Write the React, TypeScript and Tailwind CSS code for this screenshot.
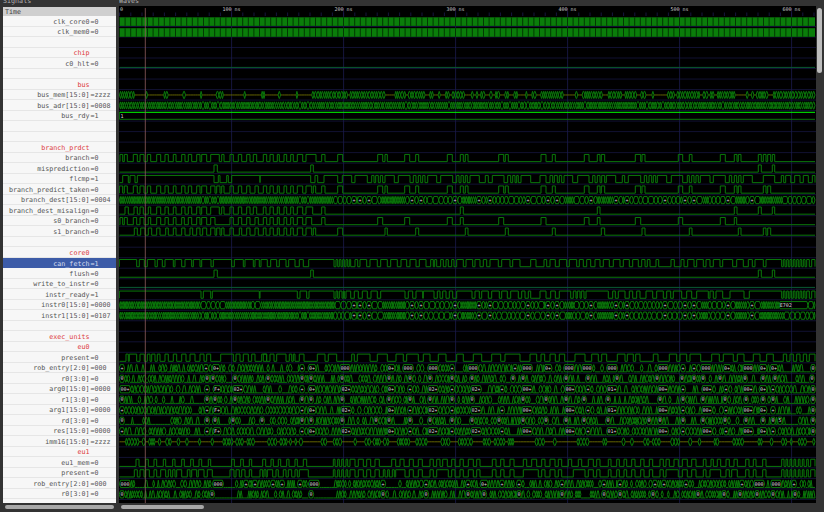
const X0 = 119.5
const X1 = 815
const GREEN = '#0a780a'
const rowY = (i: number) => 21.4 + 10.51 * i

type Row = { name: string; val?: string; group?: boolean; sel?: boolean }

const rows: Row[] = [
  { name: 'clk_core0', val: '0' },
  { name: 'clk_mem0', val: '0' },
  { name: '' },
  { name: 'chip', group: true },
  { name: 'c0_hlt', val: '0' },
  { name: '' },
  { name: 'bus', group: true },
  { name: 'bus_mem[15:0]', val: 'zzzz' },
  { name: 'bus_adr[15:0]', val: '0008' },
  { name: 'bus_rdy', val: '1' },
  { name: '' },
  { name: '' },
  { name: 'branch_prdct', group: true },
  { name: 'branch', val: '0' },
  { name: 'misprediction', val: '0' },
  { name: 'flcmp', val: '1' },
  { name: 'branch_predict_taken', val: '0' },
  { name: 'branch_dest[15:0]', val: '0004' },
  { name: 'branch_dest_misalign', val: '0' },
  { name: 's0_branch', val: '0' },
  { name: 's1_branch', val: '0' },
  { name: '' },
  { name: 'core0', group: true },
  { name: 'can_fetch', val: '1', sel: true },
  { name: 'flush', val: '0' },
  { name: 'write_to_instr', val: '0' },
  { name: 'instr_ready', val: '1' },
  { name: 'instr0[15:0]', val: '0000' },
  { name: 'instr1[15:0]', val: '0107' },
  { name: '' },
  { name: 'exec_units', group: true },
  { name: 'eu0', group: true },
  { name: 'present', val: '0' },
  { name: 'rob_entry[2:0]', val: '000' },
  { name: 'r0[3:0]', val: '0' },
  { name: 'arg0[15:0]', val: '0000' },
  { name: 'r1[3:0]', val: '0' },
  { name: 'arg1[15:0]', val: '0000' },
  { name: 'rd[3:0]', val: '0' },
  { name: 'res[15:0]', val: '0000' },
  { name: 'imm16[15:0]', val: 'zzzz' },
  { name: 'eu1', group: true },
  { name: 'eu1_mem', val: '0' },
  { name: 'present', val: '0' },
  { name: 'rob_entry[2:0]', val: '000' },
  { name: 'r0[3:0]', val: '0' },
]

// numbers below were read off 3x crops, so each list carries its crop offset
function z(off: number, v: number[]) {
  const out: [number, number][] = []
  for (let i = 0; i + 1 < v.length; i += 2) out.push([off + v[i] / 3, off + v[i + 1] / 3])
  return out
}

function pulses(i: number, spans: [number, number][]) {
  const hi = rowY(i) - 3.6
  const lo = rowY(i) + 3.6
  let d = `M${X0},${lo}`
  spans.forEach(([a, b]) => {
    d += `L${a.toFixed(1)},${lo}L${a.toFixed(1)},${hi}L${b.toFixed(1)},${hi}L${b.toFixed(1)},${lo}`
  })
  return d + `L${X1},${lo}`
}

function rng(seed: number) {
  let s = seed
  return () => {
    s = (s * 1664525 + 1013904223) % 4294967296
    return s / 4294967296
  }
}

type Label = [number, string, number?]

function hex(a: number, b: number, hi: number, lo: number) {
  const e = Math.min(1.1, (b - a) / 2)
  const m = (hi + lo) / 2
  const f = (n: number) => n.toFixed(1)
  return `M${f(a)},${m}L${f(a + e)},${hi}L${f(b - e)},${hi}L${f(b)},${m}L${f(b - e)},${lo}L${f(a + e)},${lo}Z`
}

// peak used by the register rows: value leaves the low rail and comes back
function hump(a: number, b: number, hi: number, lo: number) {
  const f = (n: number) => n.toFixed(1)
  const e = Math.min(1.1, (b - a) / 2)
  return `M${f(a)},${lo}L${f(a + e)},${hi}L${f(b - e)},${hi}L${f(b)},${lo}`
}

// eye pattern for a vector signal, wider cells where a value is printed
function eyes(
  i: number,
  seed: number,
  opts: {
    labels?: Label[]
    step?: number
    dense?: [number, number][]
    zero?: number
    active?: [number, number][]
    lowOff?: boolean
  },
) {
  const hi = rowY(i) - 3.6
  const lo = rowY(i) + 3.6
  const r = rng(seed)
  const step = opts.step ?? 4.5
  const labels = [...(opts.labels ?? [])].sort((a, b) => a[0] - b[0])
  let d = ''
  let flat = ''
  const fill = (from: number, to: number) => {
    let x = from
    while (x < to - 0.5) {
      const inDense = opts.dense?.some(([a, b]) => x >= a && x < b)
      const base = inDense ? 1.7 : step
      let w = base * (0.75 + r() * 0.6)
      if (to - x - w < 1) w = to - x
      const off = opts.active && !opts.active.some(([a, b]) => x >= a && x < b)
      if (off && opts.lowOff) {
        d += `M${x.toFixed(1)},${lo}L${(x + w).toFixed(1)},${lo}`
      } else if (off) {
        flat += `M${x.toFixed(1)},${rowY(i)}L${(x + w).toFixed(1)},${rowY(i)}`
      } else if (opts.zero) {
        const v = r()
        if (v < opts.zero) d += `M${x.toFixed(1)},${lo}L${(x + w).toFixed(1)},${lo}`
        else if (v < opts.zero + 0.4) d += hump(x, x + w, hi, lo) + `M${x.toFixed(1)},${lo}L${(x + w).toFixed(1)},${lo}`
        else d += hex(x, x + w, hi, lo)
      } else {
        d += hex(x, x + w, hi, lo)
      }
      x += w
    }
  }
  let x = X0
  const boxes: { p: number; t: string }[] = []
  labels.forEach(([p, t, width]) => {
    const w = width ?? (t ? t.length * 2.9 + 2.4 : 3.6)
    const a = width ? p : p - w / 2
    fill(x, a)
    d += hex(a, a + w, hi, lo)
    if (t) boxes.push({ p: width ? a + 1 + (t.length * 2.9) / 2 : p, t })
    x = a + w
  })
  fill(x, X1)
  return { d, flat, boxes, y: rowY(i) + 1.7 }
}

const branch = [
  ...z(0, [360, 368, 373, 382, 400, 412, 420, 432, 442, 452, 470, 482, 495, 505, 520, 528, 545, 555, 565, 575, 590, 600, 605, 620, 632, 658, 665, 672, 690, 700, 715, 725, 740, 750, 760, 770]),
  ...z(260, [10, 20, 30, 40, 52, 58, 72, 80, 92, 100, 112, 128, 138, 168, 185, 195, 233, 248, 353, 368, 375, 382, 434, 449, 467, 476, 562, 577, 601, 610, 616, 624, 716, 731, 736, 745]),
  ...z(540, [3, 18, 37, 46, 133, 147, 172, 180, 184, 194, 286, 302, 306, 315, 415, 428, 448, 456, 541, 556, 583, 591, 595, 603, 655, 664, 670, 678, 683, 692, 697, 704]),
]
const mispred = [...z(0, [642, 652]), ...z(260, [152, 160]), ...z(540, [655, 664, 697, 704])]
const flcmp = [
  ...z(0, [368, 385, 390, 405, 412, 642, 655, 660, 680, 685, 695, 780]),
  ...z(260, [0, 152, 165, 173, 192, 233, 247, 275, 285, 322, 335, 342, 347, 355, 361, 368, 375, 403, 415, 450, 460, 468, 475, 482, 488, 495, 503, 530, 542, 578, 590, 597, 603, 610, 616, 622, 630, 658, 676, 685, 697, 732, 743, 752, 758, 765, 770, 775, 783, 812]),
  ...z(540, [0, 18, 30, 38, 43, 52, 58, 65, 72, 98, 113, 147, 158, 165, 172, 180, 185, 194, 199, 227, 247, 254, 265, 302, 313, 320, 327, 335, 340, 347, 352, 380, 394, 428, 442, 448, 455, 462, 468, 475, 481, 510, 520, 556, 568, 575, 583, 590, 596, 603, 610, 637, 670, 704, 724, 731, 737, 752, 764, 780, 790, 805, 817, 825]),
]
const taken = [
  ...z(0, [358, 368, 373, 382, 400, 412, 420, 432, 442, 452, 470, 482, 495, 505, 520, 528, 545, 555, 565, 575, 590, 600, 605, 620, 632, 645, 650, 660, 665, 672, 690, 700, 715, 725, 740, 750, 765, 775]),
  ...z(260, [10, 20, 30, 40, 52, 58, 72, 80, 92, 100, 112, 128, 138, 155, 160, 167, 185, 195, 233, 248, 353, 368, 375, 382, 434, 449, 467, 476, 562, 577, 601, 610, 616, 624, 716, 731, 736, 745]),
  ...z(540, [3, 18, 37, 46, 133, 147, 172, 180, 184, 194, 286, 302, 306, 315, 415, 428, 448, 456, 541, 556, 583, 591, 595, 603, 670, 678, 683, 692]),
]
const misalign = [
  ...z(0, [375, 385, 402, 412, 420, 430, 445, 452, 470, 482, 495, 505, 520, 528, 545, 555, 565, 575, 590, 600, 605, 620, 632, 658, 665, 672, 690, 700, 715, 725, 740, 750, 760, 770]),
  ...z(260, [10, 18, 30, 40, 52, 58, 72, 80, 92, 100, 112, 128, 138, 158, 185, 195, 601, 610]),
  ...z(540, [172, 180, 583, 591, 655, 664, 697, 704]),
]
const s0 = [
  ...z(0, [360, 368, 373, 382, 400, 410, 420, 432, 445, 452, 470, 482, 495, 505, 520, 528, 545, 553, 565, 575, 590, 600, 605, 620, 632, 645, 690, 700, 715, 725, 740, 750, 765, 775]),
  ...z(260, [10, 20, 30, 40, 52, 58, 72, 80, 92, 100, 112, 128, 138, 155, 185, 195, 353, 368, 434, 449, 562, 577, 601, 610, 716, 731]),
  ...z(540, [3, 18, 133, 147, 172, 180, 286, 302, 415, 428, 541, 556, 583, 590]),
]
const s1 = [
  ...z(0, [403, 412, 422, 435, 445, 455, 470, 480, 497, 505, 520, 528, 545, 555, 570, 578, 590, 600, 608, 620, 632, 645, 650, 660, 665, 672, 690, 700, 718, 725, 740, 750, 765, 775]),
  ...z(260, [10, 18, 30, 40, 52, 58, 72, 80, 92, 100, 112, 128, 138, 155, 160, 167, 233, 248, 375, 382, 467, 476, 616, 624, 736, 745]),
  ...z(540, [37, 46, 184, 194, 306, 315, 448, 456, 595, 603, 670, 678, 683, 692]),
]
const canFetch = [
  ...z(0, [358, 410, 418, 433, 442, 465, 472, 487, 495, 520, 525, 545, 555, 575, 580, 600, 605, 633, 640, 695, 703, 730, 735, 760, 765, 778]),
  ...z(260, [3, 22, 32, 50, 58, 78, 86, 105, 118, 130, 146, 222, 228, 233, 238, 243, 248, 253, 258, 263, 268, 272, 285, 293, 300, 320, 330, 352, 362, 382, 392, 412, 423, 440, 450, 468, 478, 498, 512, 520, 524, 530, 542, 550, 558, 565, 575, 582, 590, 610, 618, 638, 645, 660, 670, 680, 690, 715, 725, 750, 758, 780, 812, 828]),
  ...z(540, [12, 20, 30, 46, 58, 80, 88, 110, 118, 130, 140, 152, 165, 180, 190, 208, 220, 240, 250, 268, 278, 295, 305, 315, 322, 330, 348, 356, 393, 403, 423, 432, 443, 462, 470, 490, 498, 510, 520, 540, 548, 578, 590, 610, 625, 637, 645, 670, 678, 725, 730, 735, 740, 745, 750, 755, 760, 765, 770, 775, 780, 785, 790, 795, 800, 808, 815, 825]),
]
const instrReady = [
  ...z(0, [358, 603, 610, 632, 637, 778]),
  ...z(260, [0, 112, 120, 140, 147, 222, 228, 233, 238, 246, 250, 253, 258, 272, 283, 295, 307, 322, 333, 352, 362, 435, 445, 458, 468, 488, 490, 522, 532, 540, 548, 558, 568, 578, 590, 636, 645, 658, 665, 685, 695, 718, 725, 742, 752, 775, 785, 795, 805, 812]),
  ...z(540, [0, 18, 32, 46, 58, 92, 100, 108, 112, 120, 124, 132, 138, 205, 218, 226, 235, 255, 268, 278, 290, 300, 318, 338, 350, 370, 380, 392, 400, 425, 440, 455, 470, 505, 510, 520, 528, 548, 570, 612, 628, 725, 730, 735, 740, 745, 750, 755, 760, 765, 770, 775, 780, 785, 790, 795, 800, 808, 815, 825]),
]
const present0 = [
  ...z(0, [378, 385, 388, 410, 420, 433, 442, 450, 455, 465, 472, 480, 495, 505, 520, 530, 545, 558, 570, 585, 600, 612, 620, 632, 662, 700, 708, 720, 730, 745, 755, 765, 785, 800]),
  ...z(260, [10, 20, 30, 42, 50, 78, 88, 95, 100, 105, 118, 132, 172, 195, 205, 230, 275, 283, 292, 330, 352, 382, 408, 430, 440, 475, 490, 510, 535, 558, 590, 610, 640, 665, 695, 722, 735, 780, 810, 830]),
  ...z(540, [3, 14, 30, 46, 58, 74, 105, 135, 155, 175, 185, 200, 232, 255, 262, 280, 287, 300, 340, 354, 388, 410, 420, 440, 450, 482, 515, 538, 550, 580, 592, 612, 640, 660, 680, 700, 730, 740, 750, 760, 770, 780, 790, 800, 808, 825]),
]
const eu1Mem = [
  ...z(0, [408, 417, 437, 445, 462, 470, 490, 497, 518, 525, 545, 553, 572, 580, 597, 605, 625, 632, 695, 703, 722, 730, 748, 755]),
  ...z(260, [8, 17, 33, 40, 55, 62, 80, 87, 105, 112, 130, 140, 220, 225, 233, 238, 245, 250, 258, 263, 270, 285, 295, 310, 320, 332, 345, 358, 395, 407, 420, 432, 448, 460, 475, 487, 510, 520, 530, 540, 548, 562, 575, 585, 600, 610, 625, 640, 650, 660, 697, 708, 722, 732, 750, 762, 790, 800, 815, 830, 845, 855, 870, 885, 895, 905, 925, 935, 955, 965, 985, 1000, 1010, 1020]),
  ...z(600, [25, 33, 50, 58, 72, 80, 95, 105, 122, 132, 148, 158, 180, 190, 198, 208, 222, 235, 247, 262, 275, 288, 310, 318, 333, 340, 352, 362, 378, 388, 402, 412, 437, 447, 460, 468, 488, 498, 545, 552, 558, 563, 570, 575, 582, 587, 595, 600, 607, 612, 620, 625, 632, 645]),
]
const present1 = [
  ...z(0, [403, 412, 420, 432, 437, 448, 462, 470, 482, 497, 505, 512, 518, 525, 530, 545, 562, 570, 575, 590, 595, 612, 622, 637, 690, 702, 708, 718, 725, 735, 748, 755]),
  ...z(260, [0, 8, 12, 18, 22, 38, 48, 55, 70, 78, 85, 95, 105, 112, 118, 145, 220, 225, 233, 238, 245, 250, 258, 263, 270, 285, 295, 310, 320, 332, 345, 358, 370, 375, 383, 388, 397, 403, 407, 435, 448, 460, 475, 487, 510, 520, 530, 565, 575, 585, 600, 610, 625, 640, 650, 660, 697, 708, 722, 732, 750, 762, 790, 835, 845, 855, 870, 885, 895, 905, 940, 975, 985, 1000, 1010, 1020]),
  ...z(600, [25, 33, 50, 58, 72, 80, 95, 105, 122, 132, 148, 158, 180, 190, 198, 235, 247, 262, 275, 288, 310, 318, 330, 362, 378, 388, 395, 412, 437, 447, 460, 468, 488, 498, 545, 552, 558, 563, 570, 575, 582, 587, 595, 600, 607, 612, 620, 625, 632, 645]),
]

const plusAt = (xs: number[]): Label[] => xs.map(x => [x, '+'])
const wide = (xs: number[]): Label[] => xs.map(x => [x, ''])
const lab = (s: string): Label[] =>
  s.split(' ').map(p => {
    const [x, t] = p.split(':')
    return [Number(x), t] as Label
  })

const destPlus = [354, 360, 369, 412, 421, 455, 479, 490, 528, 548, 557, 591, 616, 627, 665, 685, 694, 728, 752]
const destDense: [number, number][] = [[119, 333], [379, 405], [458, 473], [562, 572], [595, 612], [620, 625], [700, 707], [733, 745], [757, 782]]
const destWide = [203, 210, 218, 300, 308, 406, 449, 502, 510, 519, 528, 542, 585, 638, 647, 663, 723]
const argL = '207:+ 217:F+ 302:+ 312:0+ 346:02+ 391:0+ 410:+ 433:02+ 452:+ 476:02+ 502:+ 527:00+ 570:00+ 588:+ 612:01+ 663:00+ 683:+ 707:00+ 726:+ 748:00+ 763:0+ 773:+ 813:0'
const zeroL = (xs: number[]): Label[] => xs.map(x => [x, '0'])
const imm = [
  ...z(0, [375, 410, 425, 435, 445, 465, 470, 480, 495, 510, 525, 535, 550, 565, 590, 600, 630, 640, 665, 695, 705, 725, 740, 755]),
  ...z(260, [15, 45, 55, 80, 85, 90, 95, 105, 115, 120, 140, 147, 175, 195, 210, 240, 275, 285, 308, 330, 335, 355, 362, 380, 408, 445, 465, 500, 537, 570, 590, 630, 665, 685, 697, 730, 740, 760, 820, 850, 875, 885, 945, 980]),
  ...z(600, [5, 20, 55, 70, 88, 100, 130, 145, 155, 175, 210, 232, 262, 275, 290, 300, 338, 355, 392, 430, 470, 485, 505, 510, 540, 560, 570, 575, 580, 585, 590, 595, 600, 605, 610, 615, 630, 640]),
]
const busMem = [
  ...z(0, [358, 378, 382, 402, 432, 440, 488, 497, 544, 550, 597, 604, 643, 652, 655, 665, 725, 732, 780, 790]),
  ...z(260, [0, 6, 52, 58, 105, 113, 153, 235, 240, 260, 268, 375, 402, 415, 422, 435, 443, 495, 507, 516, 528, 537, 550, 562, 575, 612, 630, 637, 643, 650, 658, 670, 685, 695, 703, 718, 730, 745, 757, 772, 792, 800, 810, 825]),
  ...z(540, [0, 66, 98, 106, 120, 135, 140, 180, 198, 240, 252, 288, 300, 316, 333, 341, 380, 400, 404, 478, 487, 497, 508, 516, 528, 585, 610, 620, 626, 636, 642, 678, 696, 825]),
]
const eu1Active: [number, number][] = [[119, 210], [233, 306], [333, 815]]

const vectors = [
  eyes(7, 11, { active: busMem, step: 2.2 }),
  eyes(8, 23, { labels: wide(destWide), step: 2 }),
  eyes(17, 5, { labels: [...wide(destWide.slice(0, 5)), ...plusAt(destPlus)], dense: destDense }),
  eyes(27, 37, { labels: [...plusAt(destPlus), [779, 'E702', 29] as Label], dense: [[119, 200], [222, 250], [257, 333], [379, 405], [458, 473], [562, 572], [595, 612], [700, 707], [733, 745], [757, 776]], step: 4.5 }),
  eyes(28, 41, { labels: [...wide(destWide.slice(0, 5)), ...plusAt(destPlus)], dense: destDense }),
  eyes(33, 53, { labels: lab('122:+ 206:+ 216:0+ 302:+ 312:0+ 345:000 391:0+ 408:000 433:000 452:+ 473:000 515:+ 527:000 548:0+ 569:000 587:000 612:000 663:000 683:+ 694:+ 706:000 727:0+ 748:000 763:0+ 774:0+ 813:0'), step: 2.8, zero: 0.25 }),
  eyes(34, 61, { labels: zeroL([122, 207, 213, 235, 268, 302, 311, 342, 389, 410, 430, 452, 472, 513, 523, 566, 588, 617, 657, 682, 694, 703, 720, 745, 763, 775, 812]), step: 2.6, zero: 0.3 }),
  eyes(35, 71, { labels: [[125, '00+'] as Label, [238, '02+'] as Label, ...lab(argL)], step: 3, zero: 0.15 }),
  eyes(36, 79, { labels: zeroL([122, 207, 215, 235, 268, 302, 311, 342, 389, 410, 430, 452, 472, 523, 546, 566, 584, 608, 660, 683, 703, 725, 746, 763, 773, 813]), step: 2.6, zero: 0.3 }),
  eyes(37, 83, { labels: [[122, '+'] as Label, ...lab(argL)], step: 3, zero: 0.15 }),
  eyes(38, 97, { labels: [[780, '5'] as Label, ...zeroL([122, 207, 215, 233, 262, 302, 311, 342, 376, 389, 410, 430, 452, 472, 499, 523, 546, 566, 584, 608, 649, 660, 683, 703, 725, 746, 763, 773, 813])], step: 2.6, zero: 0.3 }),
  eyes(39, 101, { labels: [[122, '+'] as Label, ...lab(argL)], step: 3, zero: 0.15 }),
  eyes(40, 107, { active: imm, step: 2.6 }),
  eyes(44, 113, { labels: lab('125:000 218:000 246:+ 255:+ 273:+ 282:+ 300:+ 314:000 383:+ 426:+ 468:+ 484:0+ 502:+ 519:+ 562:+ 604:+ 620:+ 655:+ 664:+ 686:+ 742:+ 759:000 776:000 794:+'), step: 2.4, zero: 0.2, active: eu1Active, lowOff: true }),
  eyes(45, 127, { labels: zeroL([122, 212, 311, 383, 426, 468, 484, 519, 562, 604, 620, 653, 698, 724, 740, 757, 773, 795]), step: 2.4, zero: 0.25, active: eu1Active, lowOff: true }),
]

const digital: [number, [number, number][]][] = [
  [13, branch], [14, mispred], [15, flcmp], [16, taken], [18, misalign], [19, s0], [20, s1],
  [23, canFetch], [24, mispred], [26, instrReady], [32, present0], [42, eu1Mem], [43, present1],
]

const ticks = Array.from({ length: 63 }, (_, i) => 119.6 + 11.2 * i)
const majors = [1, 2, 3, 4, 5, 6].map(n => ({ n, x: 119.6 + 112 * n }))

function Waves() {
  return (
    <svg width="697" height="497" viewBox="119 6 697 497" className="block bg-black" fontFamily="'DejaVu Sans Mono', monospace">
      {rows.map((_, i) => (
        <line key={i} x1={119} x2={816} y1={rowY(i) + 5.1} y2={rowY(i) + 5.1} stroke="#15153f" strokeWidth="0.8" />
      ))}
      {ticks.map(x => (
        <line key={x} x1={x} x2={x} y1={12.5} y2={16} stroke="#20205a" strokeWidth="0.7" />
      ))}
      {majors.map(m => (
        <g key={m.n}>
          <line x1={m.x} x2={m.x} y1={8} y2={503} stroke="#1c1c4c" strokeWidth="0.8" />
          <text x={m.x} y={10.5} fontSize="5" fill="#c8c8c8" textAnchor="middle">{m.n}00 ns</text>
        </g>
      ))}
      <text x={120} y={10.5} fontSize="5" fill="#c8c8c8">0</text>

      {[0, 1].map(i => (
        <g key={i}>
          <rect x={X0} y={17.3 + i * 10.9} width={X1 - X0} height={8.6} fill="#0a7d0a" />
          {Array.from({ length: 124 }, (_, k) => (
            <line key={k} x1={X0 + k * 5.6} x2={X0 + k * 5.6} y1={17.3 + i * 10.9} y2={25.9 + i * 10.9} stroke="#033803" strokeWidth="1" />
          ))}
        </g>
      ))}

      <line x1={X0} x2={X1} y1={67.4} y2={67.4} stroke="#0a5a32" strokeWidth="1" />
      <line x1={X0} x2={X1} y1={112.3} y2={112.3} stroke="#00ff00" strokeWidth="1" />
      <line x1={X0} x2={X1} y1={119.3} y2={119.3} stroke={GREEN} strokeWidth="1" />
      <line x1={X0} x2={X0} y1={112.3} y2={119.3} stroke={GREEN} strokeWidth="0.8" />
      <text x={120.5} y={117.6} fontSize="5" fill="#d8d8d8">1</text>
      <line x1={X0} x2={X1} y1={287.4} y2={287.4} stroke="#0a5a32" strokeWidth="1" />

      {digital.map(([i, spans]) => (
        <path key={i} d={pulses(i, spans)} fill="none" stroke={GREEN} strokeWidth="1" />
      ))}
      {vectors.map((v, k) => (
        <g key={k}>
          <path d={v.flat} fill="none" stroke="#6e6e00" strokeWidth="0.9" />
          <path d={v.d} fill="none" stroke={GREEN} strokeWidth="1" />
          {v.boxes.map(b => (
            <text key={b.p} x={b.p} y={v.y} fontSize="5" fill="#d8d8d8" textAnchor="middle">{b.t}</text>
          ))}
        </g>
      ))}

      <line x1={145.3} x2={145.3} y1={8} y2={503} stroke="#8f5d5d" strokeWidth="0.8" />
    </svg>
  )
}

export default function App() {
  return (
    <div className="flex w-[824px] h-[512px] bg-[#333333] overflow-hidden font-['DejaVu_Sans_Mono',monospace] text-[6.7px] leading-none">
      <div className="flex flex-col w-[119px] pl-[3px] pr-[3px]">
        <div className="h-[7px] overflow-hidden text-[#b0b0b0] leading-[3px]">Signals</div>
        <div className="flex flex-col h-[496px] bg-[#f7f7f7] overflow-hidden">
          <div className="h-[9px] shrink-0 bg-[#cfcfcf] text-[#444] pl-[2px] pt-[1px] flex items-center">Time</div>
          {rows.map((r, i) => (
            <div
              key={i}
              className={
                r.sel
                  ? 'flex items-center h-[10.51px] pt-[3px] shrink-0 bg-[#3d5ca8] text-[#d5dcf0]'
                  : 'flex items-center h-[10.51px] pt-[3px] shrink-0 border-b-[0.5px] border-[#e6e6e6] text-[#555555]'
              }
            >
              <span className={r.group ? 'w-[86.5px] text-right text-[#dd3c3c]' : 'w-[86.5px] text-right'}>{r.name}</span>
              {r.val && <span className="ml-[1px]">={r.val}</span>}
            </div>
          ))}
        </div>
        <div className="pt-[2px] pl-[2px]">
          <div className="w-[109px] h-[4px] rounded-full bg-[#a8a8a8]" />
        </div>
      </div>

      <div className="flex flex-col w-[697px]">
        <div className="h-[6px] overflow-hidden text-[#b0b0b0] leading-[3px]">Waves</div>
        <Waves />
        <div className="pt-[1.5px] pl-[2px]">
          <div className="w-[83px] h-[4px] rounded-full bg-[#a8a8a8]" />
        </div>
      </div>

      <div className="w-[8px] pt-[8px] pl-[1px]">
        <div className="w-[5px] h-[65px] rounded-full bg-[#bdbdbd]" />
      </div>
    </div>
  )
}
